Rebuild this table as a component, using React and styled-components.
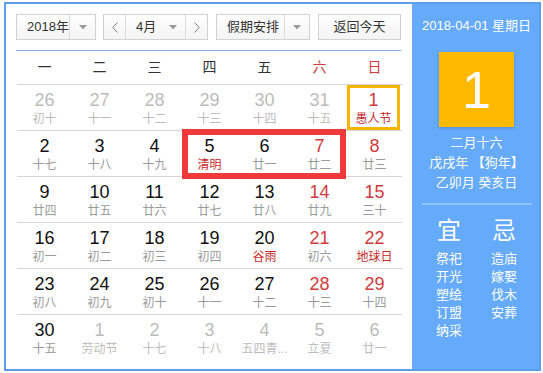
import React from 'react';
import styled, { createGlobalStyle } from 'styled-components';

const Global = createGlobalStyle`
  html, body { margin: 0; padding: 0; background: #fff; }
  body { font-family: "Liberation Sans", "Noto Sans CJK SC", sans-serif; }
`;

const FONT = `"Liberation Sans", "Noto Sans CJK SC", sans-serif`;
const RED = '#d23a40';
const FEST = '#c8292c';
const GRAY = '#bcbcbc';

const Frame = styled.div`
  margin: 2px 0 0 4px;
  width: 537px;
  height: 369px;
  box-sizing: border-box;
  border: 2px solid #5a9eec;
  display: flex;
  font-family: ${FONT};
`;

const Main = styled.div`
  width: 406px;
  flex: none;
  background: #fff;
  padding: 10px 0 0 10px;
  box-sizing: border-box;
`;

const Toolbar = styled.div`
  display: flex;
  height: 26px;
  align-items: stretch;
`;

const Box = styled.div`
  display: flex;
  width: ${p => p.$w}px;
  margin-left: ${p => p.$ml || 0}px;
  box-sizing: border-box;
  border: 1px solid #d2d2d2;
  background: linear-gradient(#ffffff, #f4f4f4);
  font-size: 13px;
  color: #333;
`;

const Label = styled.div`
  flex: 1;
  padding-left: ${p => p.$pl ?? 10}px;
  line-height: 24px;
  white-space: nowrap;
  text-align: ${p => p.$center ? 'center' : 'left'};
`;

const ArrowPart = styled.div`
  width: ${p => p.$w || 24}px;
  flex: none;
  display: flex;
  align-items: center;
  justify-content: center;
  border-left: ${p => p.$divider ? '1px solid #dcdcdc' : 'none'};
`;

const NavBtn = styled.div`
  width: 21px;
  flex: none;
  display: flex;
  align-items: center;
  justify-content: center;
  border-right: ${p => p.$side === 'left' ? '1px solid #dcdcdc' : 'none'};
  border-left: ${p => p.$side === 'right' ? '1px solid #dcdcdc' : 'none'};
`;

const Caret = () => (
  <svg width="8" height="5" viewBox="0 0 8 5"><polygon points="0,0 8,0 4,4.5" fill="#9a9a9a" /></svg>
);
const Chevron = ({ dir }) => (
  <svg width="6" height="11" viewBox="0 0 6 11">
    <polyline points={dir === 'left' ? '5.5,0.5 0.8,5.5 5.5,10.5' : '0.5,0.5 5.2,5.5 0.5,10.5'} fill="none" stroke="#777" strokeWidth="1" />
  </svg>
);

const BlueLine = styled.div`
  margin-top: 10px;
  width: 385px;
  height: 1px;
  background: #7db2ee;
`;

const Grid = styled.div`
  position: relative;
  width: 385px;
  margin-left: 1px;
`;

const HeadRow = styled.div`
  display: grid;
  grid-template-columns: repeat(7, 55px);
  height: 33px;
  border-bottom: 1px solid #d6d6d6;
`;

const HeadCell = styled.div`
  text-align: center;
  line-height: 33px;
  font-size: 14px;
  color: ${p => p.$red ? RED : '#333'};
`;

const Row = styled.div`
  display: grid;
  grid-template-columns: repeat(7, 55px);
  height: 45px;
  border-bottom: ${p => p.$last ? 'none' : '1px solid #d6d6d6'};
`;

const Cell = styled.div`
  box-sizing: border-box;
  text-align: center;
  padding-top: ${p => p.$today ? 2 : 5}px;
  border: ${p => p.$today ? '3px solid #f6b500' : 'none'};
  width: ${p => p.$today ? 53 : 55}px;
  height: 45px;
`;

const Num = styled.div`
  font-size: 18px;
  line-height: 20px;
  color: ${p => p.$c};
`;

const Lunar = styled.div`
  font-size: 12px;
  line-height: 18px;
  white-space: nowrap;
  color: ${p => p.$c};
`;

const Highlight = styled.div`
  position: absolute;
  left: 165px;
  top: 78px;
  width: 164px;
  height: 50px;
  box-sizing: border-box;
  border: 6px solid #ef3a3c;
  pointer-events: none;
`;

const Side = styled.div`
  flex: 1;
  background: #65aafb;
  color: #fff;
  display: flex;
  flex-direction: column;
  align-items: center;
  padding: 12px 0 0 2px;
  box-sizing: border-box;
`;

const DateLine = styled.div`
  font-size: 13px;
  line-height: 20px;
  white-space: nowrap;
`;

const DayBox = styled.div`
  margin-top: 16px;
  width: 75px;
  height: 75px;
  background: #ffb900;
  box-shadow: 0 1px 3px rgba(0, 0, 0, 0.18);
  display: flex;
  align-items: center;
  justify-content: center;
  font-size: 52px;
  color: #fff;
`;

const Info = styled.div`
  margin-top: 6px;
  font-size: 13px;
  line-height: 20px;
  text-align: center;
  white-space: nowrap;
`;

const Divider = styled.div`
  margin-top: 10px;
  width: 110px;
  height: 2px;
  background: #8fc3fb;
`;

const YiJi = styled.div`
  margin-top: 11px;
  display: flex;
  gap: 5px;
`;

const YiCol = styled.div`
  width: 50px;
  display: flex;
  flex-direction: column;
  align-items: center;
`;

const YiHead = styled.div`
  font-size: 24px;
  line-height: 30px;
  margin-bottom: 4px;
`;

const YiItem = styled.div`
  font-size: 13px;
  line-height: 18px;
`;

// kind: 'o' other month, 'n' normal, 'w' weekend
const rows = [
  [['26','初十','o'],['27','十一','o'],['28','十二','o'],['29','十三','o'],['30','十四','o'],['31','十五','o'],['1','愚人节','w',true,true]],
  [['2','十七','n'],['3','十八','n'],['4','十九','n'],['5','清明','n',true],['6','廿一','n'],['7','廿二','w'],['8','廿三','w']],
  [['9','廿四','n'],['10','廿五','n'],['11','廿六','n'],['12','廿七','n'],['13','廿八','n'],['14','廿九','w'],['15','三十','w']],
  [['16','初一','n'],['17','初二','n'],['18','初三','n'],['19','初四','n'],['20','谷雨','n',true],['21','初六','w'],['22','地球日','w',true]],
  [['23','初八','n'],['24','初九','n'],['25','初十','n'],['26','十一','n'],['27','十二','n'],['28','十三','w'],['29','十四','w']],
  [['30','十五','n'],['1','劳动节','o'],['2','十七','o'],['3','十八','o'],['4','五四青...','o'],['5','立夏','o'],['6','廿一','o']],
];

const weekdays = ['一','二','三','四','五','六','日'];

export default function App() {
  return (
    <>
      <Global />
      <Frame>
        <Main>
          <Toolbar>
            <Box $w={80}>
              <Label>2018年</Label>
              <ArrowPart $w={25} $divider><Caret /></ArrowPart>
            </Box>
            <Box $w={105} $ml={7}>
              <NavBtn $side="left"><Chevron dir="left" /></NavBtn>
              <Label>4月</Label>
              <ArrowPart $w={24}><Caret /></ArrowPart>
              <NavBtn $side="right"><Chevron dir="right" /></NavBtn>
            </Box>
            <Box $w={94} $ml={8}>
              <Label>假期安排</Label>
              <ArrowPart $w={24} $divider><Caret /></ArrowPart>
            </Box>
            <Box $w={83} $ml={8}>
              <Label $pl={0} $center>返回今天</Label>
            </Box>
          </Toolbar>
          <BlueLine />
          <Grid>
            <HeadRow>
              {weekdays.map((w, i) => <HeadCell key={w} $red={i >= 5}>{w}</HeadCell>)}
            </HeadRow>
            {rows.map((r, ri) => (
              <Row key={ri} $last={ri === rows.length - 1}>
                {r.map(([n, l, k, fest, today], ci) => {
                  const numC = k === 'o' ? GRAY : k === 'w' ? RED : '#111';
                  const lunC = k === 'o' ? GRAY : fest ? FEST : '#9a9a9a';
                  return (
                    <Cell key={ci} $today={today}>
                      <Num $c={numC}>{n}</Num>
                      <Lunar $c={lunC}>{l}</Lunar>
                    </Cell>
                  );
                })}
              </Row>
            ))}
            <Highlight />
          </Grid>
        </Main>
        <Side>
          <DateLine>2018-04-01 星期日</DateLine>
          <DayBox>1</DayBox>
          <Info>
            <div>二月十六</div>
            <div>戊戌年 【狗年】</div>
            <div>乙卯月 癸亥日</div>
          </Info>
          <Divider />
          <YiJi>
            <YiCol>
              <YiHead>宜</YiHead>
              {['祭祀','开光','塑绘','订盟','纳采'].map(t => <YiItem key={t}>{t}</YiItem>)}
            </YiCol>
            <YiCol>
              <YiHead>忌</YiHead>
              {['造庙','嫁娶','伐木','安葬'].map(t => <YiItem key={t}>{t}</YiItem>)}
            </YiCol>
          </YiJi>
        </Side>
      </Frame>
    </>
  );
}
